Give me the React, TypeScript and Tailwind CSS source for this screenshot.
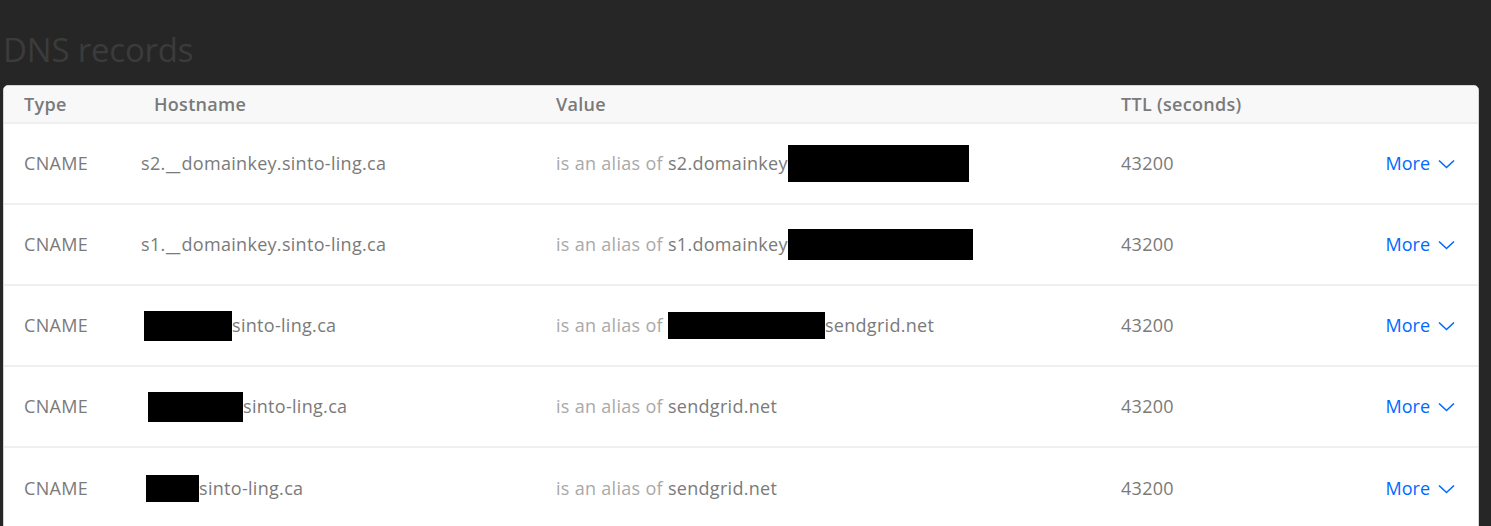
import React from "react";

type DnsRecord = {
  type: string;
  hostOffset: string;
  host: string;
  hostBox?: { w: string; h: string };
  valuePrefix?: string;
  valueBox?: { w: string; h: string };
  valueSuffix?: string;
  ttl: number;
};

const records: DnsRecord[] = [
  {
    type: "CNAME",
    hostOffset: "-ml-[13px]",
    host: "s2._domainkey.sinto-ling.ca",
    valuePrefix: "s2.domainkey",
    valueBox: { w: "w-[181px]", h: "h-[37px]" },
    ttl: 43200,
  },
  {
    type: "CNAME",
    hostOffset: "-ml-[13px]",
    host: "s1._domainkey.sinto-ling.ca",
    valuePrefix: "s1.domainkey",
    valueBox: { w: "w-[185px]", h: "h-[31px]" },
    ttl: 43200,
  },
  {
    type: "CNAME",
    hostOffset: "-ml-[10px]",
    hostBox: { w: "w-[88px]", h: "h-[30px]" },
    host: "sinto-ling.ca",
    valueBox: { w: "w-[157px]", h: "h-[27px]" },
    valueSuffix: "sendgrid.net",
    ttl: 43200,
  },
  {
    type: "CNAME",
    hostOffset: "-ml-[6px]",
    hostBox: { w: "w-[95px]", h: "h-[30px]" },
    host: "sinto-ling.ca",
    valueSuffix: "sendgrid.net",
    ttl: 43200,
  },
  {
    type: "CNAME",
    hostOffset: "-ml-[8px]",
    hostBox: { w: "w-[53px]", h: "h-[27px]" },
    host: "sinto-ling.ca",
    valueSuffix: "sendgrid.net",
    ttl: 43200,
  },
];

const cols = "grid grid-cols-[130px_402px_565px_1fr_auto] items-center pl-5 pr-[23px]";

// the original font draws a much wider underscore
function HostText({ text }: { text: string }) {
  const parts = text.split("_");
  return (
    <span className="whitespace-pre">
      {parts.map((p, i) => (
        <React.Fragment key={i}>
          {i > 0 && (
            <span className="inline-block w-[16px] scale-x-[1.8] origin-left">_</span>
          )}
          {p}
        </React.Fragment>
      ))}
    </span>
  );
}

function Chevron() {
  return (
    <svg width="17" height="10" viewBox="0 0 17 10" fill="none" className="mt-[1px]">
      <path d="M1 1.5 L8.5 8.5 L16 1.5" stroke="currentColor" strokeWidth="1.6" />
    </svg>
  );
}

export default function App() {
  return (
    <div
      className="min-h-[526px] w-full bg-[#262626] pl-[3px] pr-[12px] overflow-hidden"
      style={{ fontFamily: "'Open Sans', Lato, sans-serif" }}
    >
      {/* Title */}
      <h1 className="pt-[30px] h-[85px] text-[33px] leading-[40px] text-[#3b3b3b] font-normal tracking-[-0.2px]">
        DNS records
      </h1>

      {/* Table card */}
      <div className="rounded-t-[5px] border border-[#d4d4d4] bg-white overflow-hidden">
        <div className={`${cols} h-[38px] bg-[#f8f8f8] border-b-2 border-[#efefef] text-[18px] font-semibold text-[#7a7a7a] tracking-[0.3px]`}>
          <span>Type</span>
          <span>Hostname</span>
          <span>Value</span>
          <span>TTL (seconds)</span>
          <span />
        </div>

        {records.map((r, i) => (
          <div
            key={i}
            className={`${cols} h-[81px] text-[18px] text-[#7a7a7a] tracking-[0.3px] ${
              i < records.length - 1 ? "border-b-2 border-[#efefef]" : ""
            }`}
          >
            <span>{r.type}</span>
            <span className={`flex items-center ${r.hostOffset}`}>
              {r.hostBox && <span className={`inline-block bg-black ${r.hostBox.w} ${r.hostBox.h}`} />}
              <HostText text={r.host} />
            </span>
            <span className="flex items-center">
              <span className="text-[#a9a9a9] whitespace-pre">is an alias of </span>
              {r.valuePrefix && <span>{r.valuePrefix}</span>}
              {r.valueBox && (
                <span className={`inline-block bg-black ${r.valueBox.w} ${r.valueBox.h}`} />
              )}
              {r.valueSuffix && <span>{r.valueSuffix}</span>}
            </span>
            <span>{r.ttl}</span>
            <button className="flex items-center gap-[8px] text-[#0069ff] tracking-normal">
              More
              <Chevron />
            </button>
          </div>
        ))}
      </div>
    </div>
  );
}
